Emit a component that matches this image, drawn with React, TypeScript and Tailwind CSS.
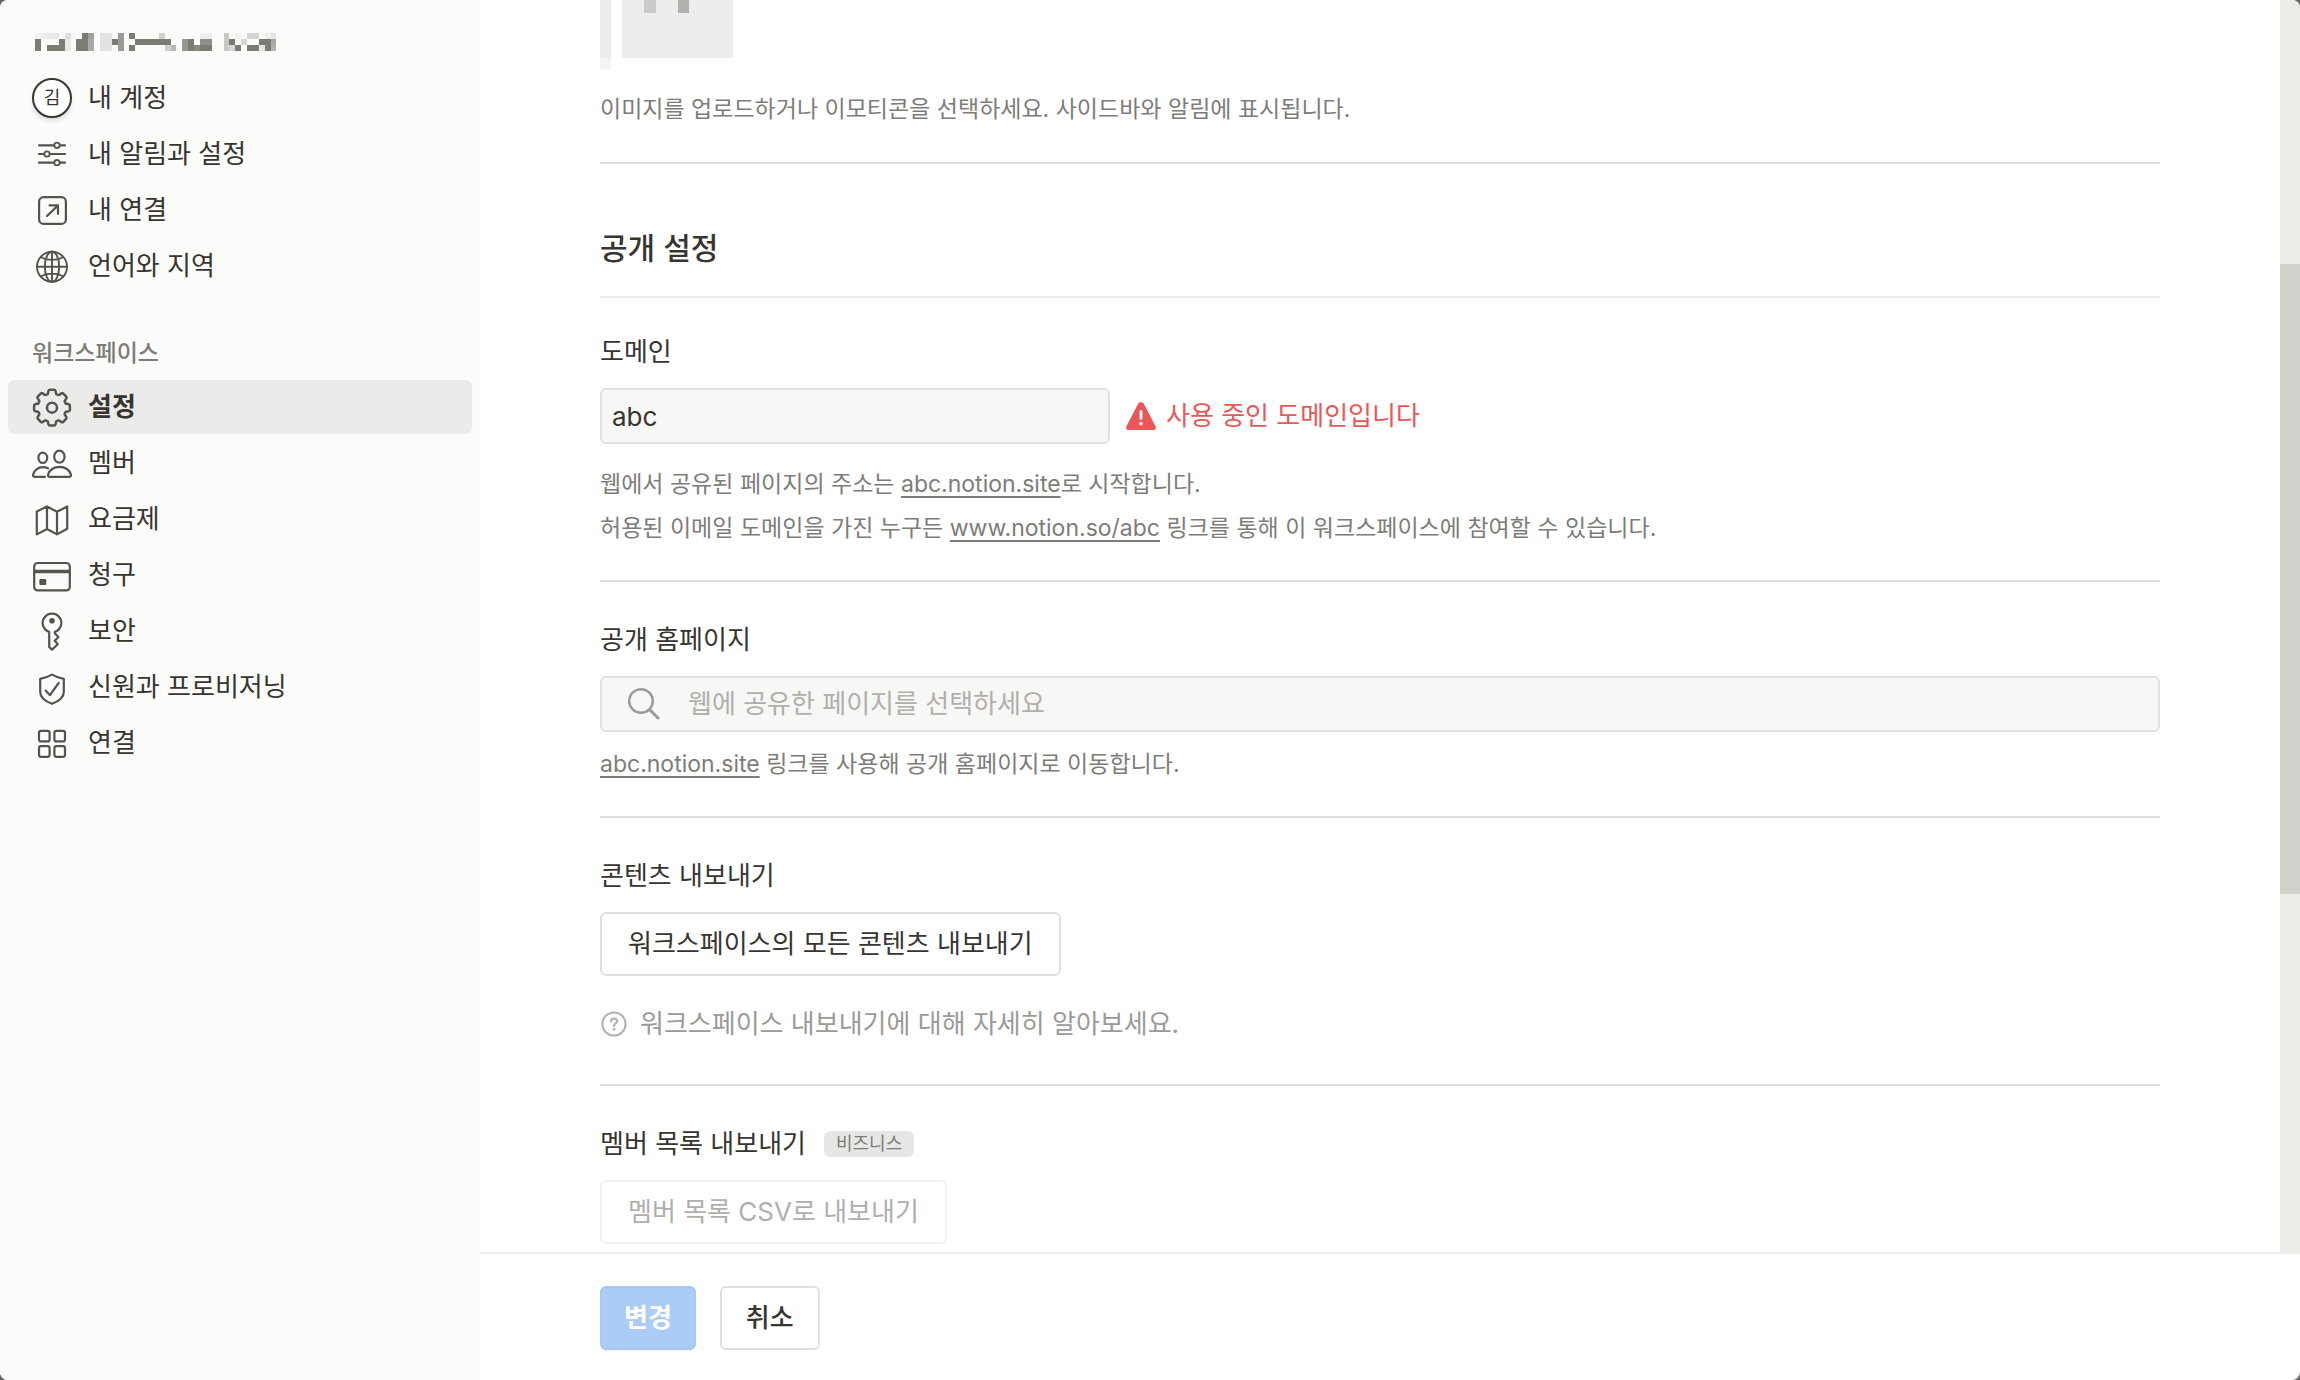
import React from 'react';

type NavItem = {
  label: string;
  icon: React.ReactNode;
  active?: boolean;
};

// [x, y, width, color] of each block in the blurred account name
const nameBlocks: [number, number, number, string][] = [
  [0, 0, 6, '#f1f1f0'], [6, 0, 6, '#ececeb'], [12, 0, 12, '#e7e7e6'], [30, 0, 6, '#dededd'], [36, 0, 5, '#f5f5f4'],
  [47, 0, 6, '#7c7b74'], [53, 0, 6, '#a1a09c'], [65, 0, 12, '#e2e2e1'], [83, 0, 6, '#9b9a97'], [94, 0, 6, '#7c7b74'],
  [124, 0, 6, '#cfcfcd'], [165, 0, 12, '#ededec'], [189, 0, 5, '#c8c8c5'], [200, 0, 6, '#f3f3f2'], [212, 0, 12, '#d4d4d2'],
  [230, 0, 6, '#efefee'], [236, 0, 5, '#e5e5e4'],
  [0, 6, 6, '#7c7b74'], [24, 6, 6, '#7c7b74'], [30, 6, 6, '#e8e8e7'], [41, 6, 12, '#7c7b74'], [53, 6, 6, '#a9a9a6'],
  [65, 6, 12, '#e2e2e1'], [77, 6, 6, '#7c7b74'], [83, 6, 6, '#9b9a97'], [100, 6, 36, '#7c7b74'], [147, 6, 6, '#969692'],
  [153, 6, 6, '#7c7b74'], [165, 6, 12, '#8d8d8a'], [189, 6, 5, '#c8c8c5'], [194, 6, 6, '#7c7b74'], [206, 6, 6, '#d6d6d4'],
  [224, 6, 12, '#7c7b74'], [236, 6, 5, '#a9a9a6'],
  [0, 12, 6, '#7c7b74'], [12, 12, 18, '#7c7b74'], [30, 12, 6, '#e8e8e7'], [41, 12, 12, '#7c7b74'], [53, 12, 6, '#a9a9a6'],
  [65, 12, 12, '#e2e2e1'], [83, 12, 6, '#9b9a97'], [94, 12, 6, '#7c7b74'], [130, 12, 6, '#d0d0ce'], [136, 12, 5, '#b9b9b6'],
  [147, 12, 6, '#969692'], [153, 12, 6, '#7c7b74'], [159, 12, 6, '#8a8a86'], [165, 12, 12, '#7c7b74'], [189, 12, 5, '#c8c8c5'],
  [194, 12, 6, '#d6d6d4'], [200, 12, 6, '#7c7b74'], [212, 12, 12, '#7c7b74'], [224, 12, 6, '#e5e5e4'], [230, 12, 6, '#7c7b74'],
  [236, 12, 5, '#b0b0ad'],
];

const gearPath = () => {
  const points: string[] = [];
  for (let i = 0; i < 8; i++) {
    const a = (i * Math.PI) / 4;
    const at = (x: number, y: number) =>
      `${(20 + x * Math.cos(a) - y * Math.sin(a)).toFixed(2)} ${(20.7 + x * Math.sin(a) + y * Math.cos(a)).toFixed(2)}`;
    points.push(
      `${i === 0 ? 'M' : 'L'}${at(-4.2, -13.6)} L${at(-3.5, -16.8)} Q${at(-3.2, -17.9)} ${at(-2, -17.9)} L${at(2, -17.9)} Q${at(3.2, -17.9)} ${at(3.5, -16.8)} L${at(4.2, -13.6)}`
    );
  }
  return points.join(' ') + 'Z';
};

const Icon: React.FC<{ children: React.ReactNode }> = ({ children }) => (
  <svg
    viewBox="0 0 40 40"
    className="w-10 h-10 shrink-0 text-[#55534e]"
    fill="none"
    stroke="currentColor"
    strokeWidth="2.2"
    strokeLinecap="round"
    strokeLinejoin="round"
    aria-hidden="true"
  >
    {children}
  </svg>
);

const accountItems: NavItem[] = [
  {
    label: '내 계정',
    icon: (
      <span className="w-10 h-10 shrink-0 rounded-full border-2 border-[#37352f] bg-white shadow-md flex items-center justify-center text-lg leading-none font-normal">
        김
      </span>
    ),
  },
  {
    label: '내 알림과 설정',
    icon: (
      <Icon>
        <path d="M7 11.3H22M28 11.3H33M7 20H12M18 20H33M7 28.7H22M28 28.7H33" />
        <circle cx="25" cy="11.3" r="2.7" strokeWidth="1.8" />
        <circle cx="15" cy="20" r="2.7" strokeWidth="1.8" />
        <circle cx="25" cy="28.7" r="2.7" strokeWidth="1.8" />
      </Icon>
    ),
  },
  {
    label: '내 연결',
    icon: (
      <Icon>
        <rect x="7.1" y="7.1" width="26.8" height="26.8" rx="4.5" />
        <path d="M15 26L26 15.4M17.6 15.4H26V23.8" />
      </Icon>
    ),
  },
  {
    label: '언어와 지역',
    icon: (
      <Icon>
        <g strokeWidth="1.9">
          <circle cx="20" cy="20.7" r="15" />
          <ellipse cx="20" cy="20.7" rx="7.2" ry="15" />
          <path d="M20 5.7V35.7M5 20.7H35M9 11C12 13 16 13.8 20 13.8S28 13 31 11M9 30.4C12 28.4 16 27.6 20 27.6S28 28.4 31 30.4" />
        </g>
      </Icon>
    ),
  },
];

const workspaceItems: NavItem[] = [
  {
    label: '설정',
    active: true,
    icon: (
      <Icon>
        <path d={gearPath()} strokeWidth="2.5" />
        <circle cx="20" cy="20.7" r="5" strokeWidth="2.5" />
      </Icon>
    ),
  },
  {
    label: '멤버',
    icon: (
      <Icon>
        <ellipse cx="27.4" cy="13.7" rx="5.2" ry="6" />
        <ellipse cx="10.8" cy="14.8" rx="4.4" ry="5.2" />
        <path d="M18 33.8H37C38.6 33.8 39.2 33 38.9 31.6C37.8 27 33 23.9 27.5 23.9S17.2 27 16.1 31.6C15.8 33 16.4 33.8 18 33.8Z" />
        <path d="M13 33.8H3C1.4 33.8 .8 33 1.1 31.6C2 27.4 6 24.2 11 24.2C13 24.2 14.6 24.6 16 25.3" />
      </Icon>
    ),
  },
  {
    label: '요금제',
    icon: (
      <Icon>
        <path d="M4.8 12.6L15 7.4L25 12.8L35.2 7.4V29.8L25 35.4L15 30L4.8 35.4ZM15 7.4V30M25 12.8V35.4" />
      </Icon>
    ),
  },
  {
    label: '청구',
    icon: (
      <Icon>
        <rect x="2.2" y="8" width="35.6" height="27.4" rx="3.5" />
        <path d="M2.5 16.5H37.5" strokeWidth="3.4" strokeLinecap="butt" />
        <rect x="7.4" y="24" width="6.8" height="6" rx="1.2" fill="currentColor" stroke="none" />
      </Icon>
    ),
  },
  {
    label: '보안',
    icon: (
      <Icon>
        <path d="M17.2 20.8A9.3 9.3 0 1 1 22.8 20.8V22.2L26.4 26L22.8 29.8L25.8 33.2L20 38.6L17.2 36Z" />
        <circle cx="20" cy="9.8" r="2.8" fill="currentColor" stroke="none" />
      </Icon>
    ),
  },
  {
    label: '신원과 프로비저닝',
    icon: (
      <Icon>
        <path d="M20 7.6C16 9.8 12 11.2 8.2 11.8V25C8.2 30 13 34.2 20 36.8C27 34.2 31.8 30 31.8 25V11.8C28 11.2 24 9.8 20 7.6Z" />
        <path d="M13.6 23.6L18 28.2L26.6 16" />
      </Icon>
    ),
  },
  {
    label: '연결',
    icon: (
      <Icon>
        <rect x="7" y="7.8" width="10.6" height="10.6" rx="2" />
        <rect x="22.4" y="7.8" width="10.6" height="10.6" rx="2" />
        <rect x="7" y="23.2" width="10.6" height="10.6" rx="2" />
        <rect x="22.4" y="23.2" width="10.6" height="10.6" rx="2" />
      </Icon>
    ),
  },
];

const NavList: React.FC<{ items: NavItem[] }> = ({ items }) => (
  <ul className="flex flex-col gap-0.5 px-2">
    {items.map((item) => (
      <li key={item.label}>
        <button
          type="button"
          className={`flex w-full h-[54px] items-center gap-4 rounded-md px-6 text-left text-[26px] leading-9 ${
            item.active ? 'bg-[#ebebea] font-bold' : 'font-normal'
          }`}
        >
          {item.icon}
          <span>{item.label}</span>
        </button>
      </li>
    ))}
  </ul>
);

const App: React.FC = () => {
  return (
    <div className="h-screen bg-[#666666]">
      <div className="flex h-full overflow-hidden rounded-lg bg-white text-[#37352f] text-[26px] leading-9 font-['Inter','Noto_Sans_CJK_KR',sans-serif]">
        {/* Sidebar */}
        <nav className="w-[480px] shrink-0 bg-[#fbfbfa] pt-[33px]">
          <svg width="241" height="18" className="block ml-[35px] mb-5" shapeRendering="crispEdges" aria-hidden="true">
            {nameBlocks.map(([x, y, width, color]) => (
              <rect key={`${x}-${y}`} x={x} y={y} width={width} height="6" fill={color} />
            ))}
          </svg>
          <NavList items={accountItems} />
          <h2 className="mt-[42px] mb-[9px] px-8 text-[23px] leading-9 font-medium text-[#7d7c78]">워크스페이스</h2>
          <NavList items={workspaceItems} />
        </nav>

        <div className="flex min-w-0 flex-1 flex-col">
          <div className="flex min-h-0 flex-1">
            <main className="min-w-0 flex-1 overflow-hidden px-[120px]">
              {/* Workspace icon */}
              <section className="border-b-2 border-[#dfdfde] pb-[35px]">
                <svg width="133" height="69" shapeRendering="crispEdges" aria-hidden="true">
                  <rect width="11" height="58" fill="#ededec" />
                  <rect y="58" width="11" height="11" fill="#f4f4f3" />
                  <rect x="22" width="111" height="58" fill="#ededec" />
                  <rect x="44" width="12" height="13" fill="#cacac8" />
                  <rect x="78" width="11" height="13" fill="#b0b0ad" />
                </svg>
                <p className="mt-[22px] text-[23px] text-[#7d7c78]">
                  이미지를 업로드하거나 이모티콘을 선택하세요. 사이드바와 알림에 표시됩니다.
                </p>
              </section>

              <h1 className="border-b-2 border-[#ededec] pt-16 pb-7 text-[30px] leading-10 font-medium">공개 설정</h1>

              {/* Domain */}
              <section className="border-b-2 border-[#dfdfde] pt-9 pb-[30px]">
                <label htmlFor="domain" className="block mb-[18px]">도메인</label>
                <div className="flex items-center gap-4">
                  <input
                    id="domain"
                    type="text"
                    defaultValue="abc"
                    className="w-[510px] h-14 rounded-md border-2 border-[#e0e0df] bg-[#f7f7f5] px-2.5 outline-none"
                  />
                  <p className="flex items-center gap-2.5 text-[#eb5757]">
                    <svg viewBox="0 0 30 28" className="w-[30px] h-7" fill="currentColor" aria-hidden="true">
                      <path d="M12 2C13.3-.5 16.7-.5 18 2L29.4 24C30.6 26.2 29.4 28 27 28H3C.6 28-.6 26.2.6 24Z" />
                      <path d="M15 9.5V16.5" stroke="white" strokeWidth="2.8" strokeLinecap="round" />
                      <circle cx="15" cy="21.8" r="1.8" fill="white" />
                    </svg>
                    사용 중인 도메인입니다
                  </p>
                </div>
                <p className="mt-[18px] text-[23px] leading-[44px] text-[#7d7c78]">
                  웹에서 공유된 페이지의 주소는 <a href="#site" className="underline decoration-2 underline-offset-4">abc.notion.site</a>로 시작합니다.
                  <br />
                  허용된 이메일 도메인을 가진 누구든 <a href="#invite" className="underline decoration-2 underline-offset-4">www.notion.so/abc</a> 링크를 통해 이 워크스페이스에 참여할 수 있습니다.
                </p>
              </section>

              {/* Public home page */}
              <section className="border-b-2 border-[#dfdfde] pt-10 pb-[30px]">
                <label htmlFor="homepage" className="block mb-[18px]">공개 홈페이지</label>
                <div className="flex h-14 items-center gap-7 rounded-md border-2 border-[#e0e0df] bg-[#f7f7f5] pl-[26px] pr-4">
                  <svg viewBox="0 0 32 32" className="w-8 h-8 shrink-0 text-[#9b9a97]" fill="none" stroke="currentColor" strokeLinecap="round" aria-hidden="true">
                    <circle cx="13" cy="13" r="11.8" strokeWidth="2.4" />
                    <path d="M21.8 21.8L30 30" strokeWidth="3" />
                  </svg>
                  <input
                    id="homepage"
                    type="text"
                    placeholder="웹에 공유한 페이지를 선택하세요"
                    className="min-w-0 flex-1 bg-transparent outline-none placeholder:text-[#b0afac]"
                  />
                </div>
                <p className="mt-2.5 text-[23px] leading-[44px] text-[#7d7c78]">
                  <a href="#site" className="underline decoration-2 underline-offset-4">abc.notion.site</a> 링크를 사용해 공개 홈페이지로 이동합니다.
                </p>
              </section>

              {/* Content export */}
              <section className="border-b-2 border-[#dfdfde] pt-10 pb-[42px]">
                <h2 className="mb-[18px]">콘텐츠 내보내기</h2>
                <button type="button" className="block h-16 rounded-md border-2 border-[#dfdfde] px-[26px]">
                  워크스페이스의 모든 콘텐츠 내보내기
                </button>
                <a href="#export-help" className="mt-[30px] flex w-fit items-center gap-3 text-[#9b9a97]">
                  <svg viewBox="0 0 28 28" className="w-7 h-7 text-[#b0afac]" fill="none" stroke="currentColor" strokeLinecap="round" aria-hidden="true">
                    <circle cx="14" cy="14" r="11.6" strokeWidth="2" />
                    <path d="M11 11.4C11 9.4 12.2 8.5 14 8.5S17 9.6 17 11.2C17 13.4 14 13.4 14 16" strokeWidth="2" />
                    <circle cx="14" cy="19.3" r="1.4" fill="currentColor" stroke="none" />
                  </svg>
                  워크스페이스 내보내기에 대해 자세히 알아보세요.
                </a>
              </section>

              {/* Member list export */}
              <section className="pt-10">
                <div className="mb-[18px] flex items-center gap-[18px]">
                  <h2>멤버 목록 내보내기</h2>
                  <span className="rounded-md bg-[#e6e6e4] px-3 text-lg leading-[26px] text-[#7d7c78]">비즈니스</span>
                </div>
                <button type="button" disabled className="block h-16 rounded-md border-2 border-[#f2f2f2] px-[26px] text-[#b0afac]">
                  멤버 목록 CSV로 내보내기
                </button>
              </section>
            </main>

            {/* Scrollbar */}
            <div className="w-5 shrink-0 bg-[#edece8] pt-[264px]">
              <div className="h-[630px] bg-[#d3d1cb]" />
            </div>
          </div>

          <footer className="flex shrink-0 gap-6 border-t-2 border-[#ededec] px-[120px] pt-8 pb-[30px]">
            <button type="button" className="h-16 rounded-md border-2 border-[#a6c8f0] bg-[#abcdf5] px-[22px] font-bold text-white shadow-xs">
              변경
            </button>
            <button type="button" className="h-16 rounded-md border-2 border-[#dfdfde] px-6 font-medium">
              취소
            </button>
          </footer>
        </div>
      </div>
    </div>
  );
};

export default App;
